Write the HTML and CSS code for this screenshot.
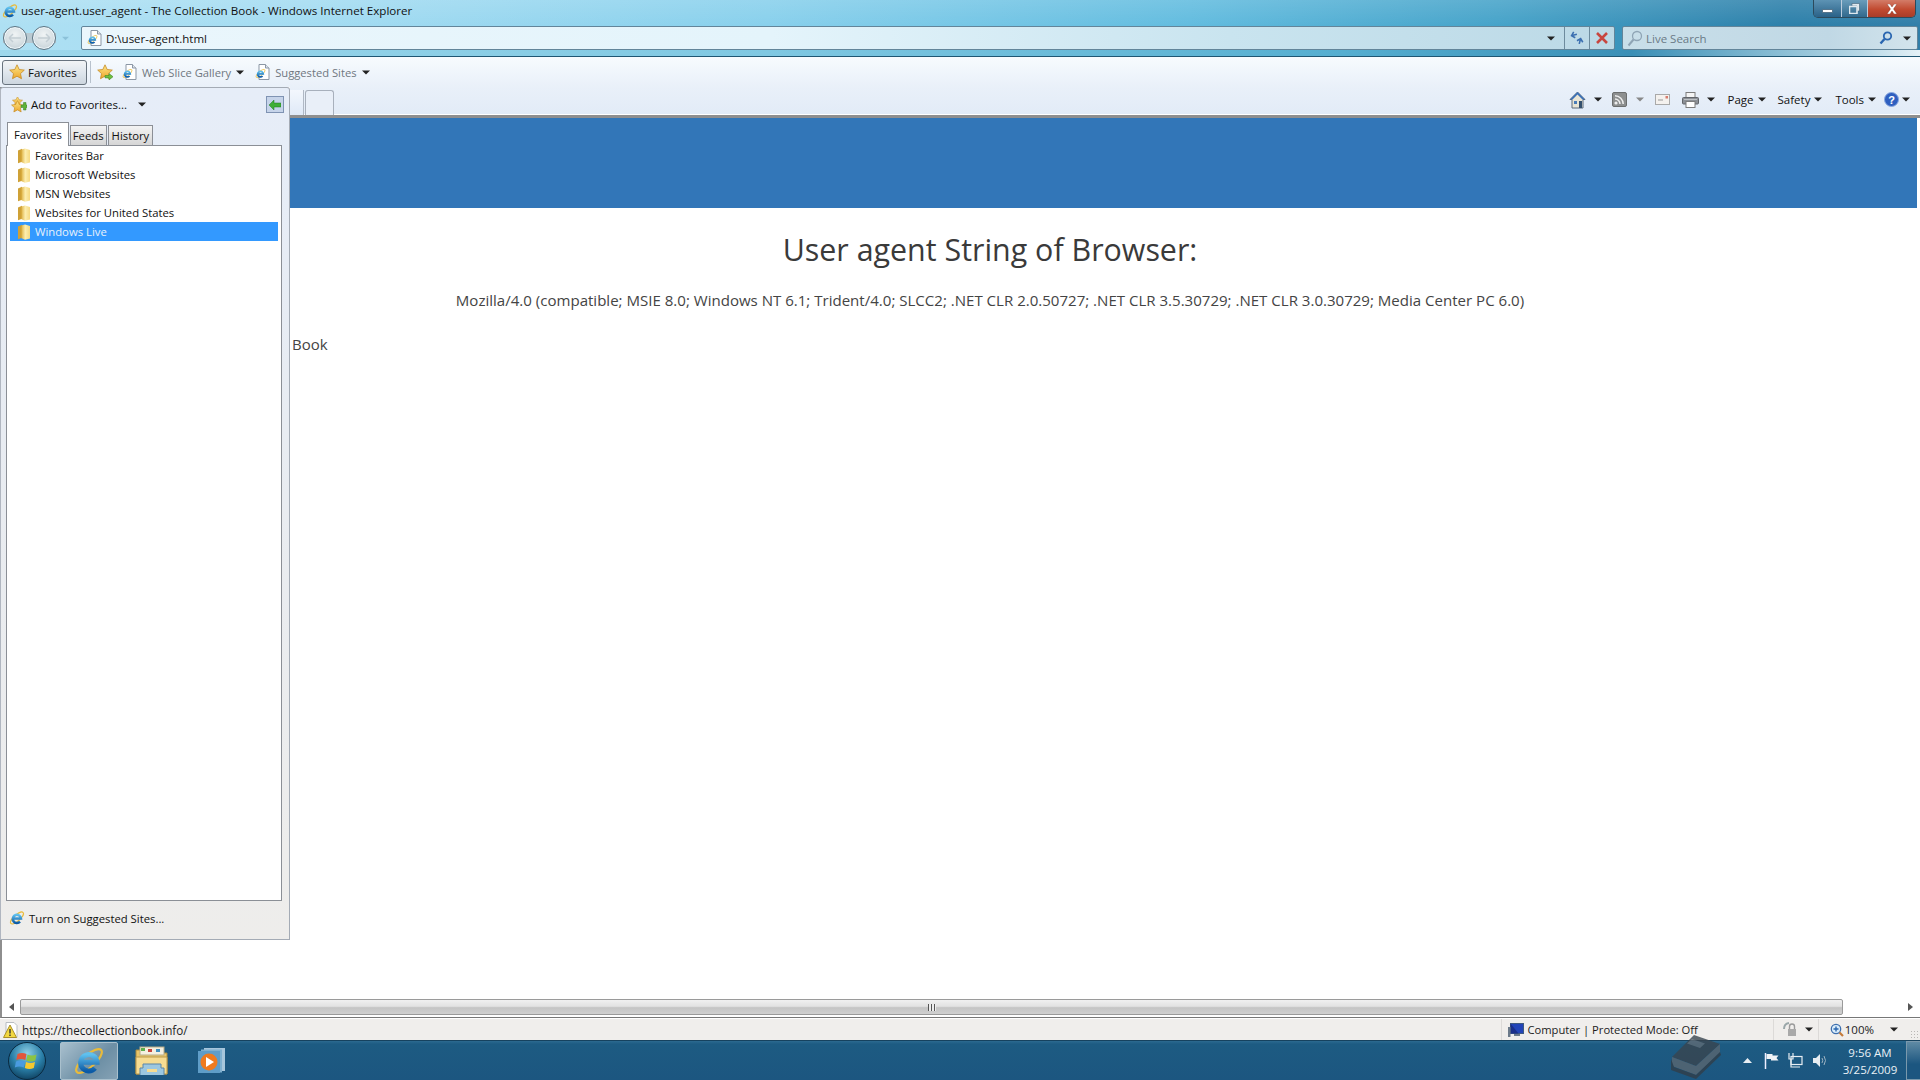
FILE: index.html
```html
<!DOCTYPE html>
<html lang="en">
<head>
<meta charset="utf-8">
<title>user-agent.user_agent - The Collection Book - Windows Internet Explorer</title>
<link rel="stylesheet" href="styles.css">
</head>
<body>
<svg class="defs" width="0" height="0" aria-hidden="true">
  <defs>
    <linearGradient id="ieBlue" x1="0" y1="0" x2="0" y2="1"><stop offset="0" stop-color="#5fc0ee"/><stop offset="1" stop-color="#0b5aa6"/></linearGradient>
    <linearGradient id="starG" x1="0" y1="0" x2="0" y2="1"><stop offset="0" stop-color="#fde98a"/><stop offset="1" stop-color="#eda52a"/></linearGradient>
    <linearGradient id="folderG" x1="0" y1="0" x2="1" y2="0"><stop offset="0" stop-color="#e0b548"/><stop offset="0.45" stop-color="#fdeeb0"/><stop offset="1" stop-color="#f6d980"/></linearGradient>
    <radialGradient id="orbG" cx="0.5" cy="0.3" r="0.75"><stop offset="0" stop-color="#8fd0e6"/><stop offset="0.55" stop-color="#2a7fa8"/><stop offset="1" stop-color="#0c3a58"/></radialGradient>
    <symbol id="ie" viewBox="0 0 16 16">
      <ellipse cx="8" cy="8" rx="8.200" ry="3" transform="rotate(-42 8 8)" fill="none" stroke="#e9bb3a" stroke-width="1.100"/>
      <path d="M4.200 8.600h7.800A4.100 4.100 0 1 0 11 11.600" fill="none" stroke="url(#ieBlue)" stroke-width="2.500"/>
    </symbol>
    <symbol id="page-ie" viewBox="0 0 16 16">
      <path d="M4 .5h6.500L14 4v11.500H4z" fill="#fff" stroke="#8b97a5"/>
      <path d="M10.500.5V4H14" fill="#dfe6ee" stroke="#8b97a5"/>
      <use href="#ie" x="0" y="4" width="11" height="11"/>
    </symbol>
    <symbol id="star" viewBox="0 0 16 16">
      <path d="M8 .8l2.200 4.700 5.100.6-3.800 3.500 1 5.100L8 12.200l-4.500 2.500 1-5.100L.7 6.100l5.100-.6z" fill="url(#starG)" stroke="#c58a24" stroke-width=".8"/>
    </symbol>
    <symbol id="folder" viewBox="0 0 14 16">
      <path d="M1 2.500L5 .8v13L1 15.200z" fill="#cfa136"/>
      <path d="M4.500 1.500L8 .5l5 1.500v12.500l-5 1.200-3.500-1.500z" fill="url(#folderG)"/>
    </symbol>
    <symbol id="caret" viewBox="0 0 8 5"><path d="M0 .5h8L4 4.500z" fill="currentColor"/></symbol>
  </defs>
</svg>

<div class="window">
  <header class="chrome">
    <div class="title-row">
      <svg class="ico16 title-ico"><use href="#ie"/></svg>
      <span class="title-text">user-agent.user_agent - The Collection Book - Windows Internet Explorer</span>
      <div class="win-btns">
        <span class="win-btn win-min"><i class="min-glyph"></i></span>
        <span class="win-btn win-max">
          <svg width="11" height="11" viewBox="0 0 11 11"><path d="M3 .5h7.500V8H8V3H3z" fill="#dfe8ee" stroke="#3f5f75" stroke-width=".6"/><path d="M.5 3.500H8v7H.5z" fill="none" stroke="#dfe8ee" stroke-width="1.600"/></svg>
        </span>
        <span class="win-btn win-close">
          <svg width="14" height="10" viewBox="0 0 14 10"><path d="M2 0h3l2 3 2-3h3L8.500 5 12 10H9L7 7l-2 3H2l3.500-5z" fill="#fff" stroke="#7a2a1c" stroke-width=".4"/></svg>
        </span>
      </div>
    </div>
    <div class="nav-row">
      <div class="nav-btns">
        <span class="nav-pair">
          <span class="nav-circle"><svg width="14" height="10" viewBox="0 0 14 10"><path d="M1 5h12M1 5l4-4M1 5l4 4" stroke="#c3ced4" stroke-width="1.500" fill="none"/></svg></span>
          <span class="nav-circle"><svg width="14" height="10" viewBox="0 0 14 10"><path d="M1 5h12M13 5L9 1M13 5L9 9" stroke="#c3ced4" stroke-width="1.500" fill="none"/></svg></span>
        </span>
        <svg class="nav-drop"><use href="#caret"/></svg>
      </div>
      <div class="address">
        <svg class="ico16 addr-ico"><use href="#page-ie"/></svg>
        <span class="addr-text">D:\user-agent.html</span>
        <svg class="caret addr-caret"><use href="#caret"/></svg>
        <span class="addr-btn">
          <svg width="16" height="14" viewBox="0 0 16 14"><path d="M8 4H3M5.500 1L2.500 4 5.500 7" stroke="#3b6fb0" stroke-width="1.600" fill="none" transform="rotate(-15 5 4)"/><path d="M8 10h5M10.500 13L13.500 10 10.500 7" stroke="#3b6fb0" stroke-width="1.600" fill="none" transform="rotate(-75 11 10)"/></svg>
        </span>
        <span class="addr-btn">
          <svg width="12" height="12" viewBox="0 0 12 12"><path d="M1 1l10 10M11 1L1 11" stroke="#c8463f" stroke-width="2.600"/></svg>
        </span>
      </div>
      <div class="search">
        <svg class="search-ghost" width="16" height="18" viewBox="0 0 16 18"><circle cx="10" cy="6" r="4.500" fill="none" stroke="#8fa5b5" stroke-width="1.300"/><path d="M6.500 9.500L1.500 15.500" stroke="#8fa5b5" stroke-width="2"/></svg>
        <span class="search-text">Live Search</span>
        <svg class="search-go" width="14" height="14" viewBox="0 0 14 14"><circle cx="8.500" cy="5" r="3.700" fill="none" stroke="#2a66b0" stroke-width="1.800"/><path d="M5.500 8L1.500 12.500" stroke="#2a66b0" stroke-width="2.400"/></svg>
        <svg class="caret search-caret"><use href="#caret"/></svg>
      </div>
    </div>
  </header>

  <nav class="favbar">
    <span class="fav-btn"><svg class="ico16"><use href="#star"/></svg>Favorites</span>
    <i class="fav-sep"></i>
    <svg class="ico16 fav-add" viewBox="0 0 16 16"><use href="#star"/><path d="M8 11.500h4V9.500l4 3.200-4 3.200v-2H8z" fill="#6fbf3f" stroke="#3f8a26" stroke-width=".6"/></svg>
    <span class="fav-link"><svg class="ico16"><use href="#page-ie"/></svg><span class="fav-label">Web Slice Gallery</span><svg class="caret"><use href="#caret"/></svg></span>
    <span class="fav-link"><svg class="ico16"><use href="#page-ie"/></svg><span class="fav-label">Suggested Sites</span><svg class="caret"><use href="#caret"/></svg></span>
  </nav>

  <div class="body-area">
    <aside class="sidebar">
      <div class="side-head">
        <svg class="ico16" viewBox="0 0 16 16"><use href="#star" x="1" y="-1" width="11" height="11"/><use href="#star" x="0" y="3" width="13" height="13"/><path d="M10 8h2.500V5.500h2.500V8h1v2.500h-1V13H12.500V10.500H10z" fill="#5db33a" stroke="#3a7d22" stroke-width=".5"/></svg>
        <span class="side-add">Add to Favorites...</span>
        <svg class="caret side-caret"><use href="#caret"/></svg>
        <span class="pin"><svg width="12" height="10" viewBox="0 0 12 10"><path d="M0 5l5-5v3h7v4H5v3z" fill="#3fae35" stroke="#1f7a22" stroke-width=".5"/></svg></span>
      </div>
      <div class="tabs">
        <span class="tab tab-on">Favorites</span>
        <span class="tab tab-feeds">Feeds</span>
        <span class="tab">History</span>
      </div>
      <ul class="tree">
        <li class="tree-row"><svg class="folder"><use href="#folder"/></svg>Favorites Bar</li>
        <li class="tree-row"><svg class="folder"><use href="#folder"/></svg>Microsoft Websites</li>
        <li class="tree-row"><svg class="folder"><use href="#folder"/></svg>MSN Websites</li>
        <li class="tree-row"><svg class="folder"><use href="#folder"/></svg>Websites for United States</li>
        <li class="tree-row tree-sel"><svg class="folder"><use href="#folder"/></svg>Windows Live</li>
      </ul>
      <div class="side-foot"><svg class="ico16"><use href="#ie"/></svg>Turn on Suggested Sites...</div>
    </aside>

    <main class="pane">
      <div class="cmdbar">
        <div class="tabstrip"><span class="ie-tab"></span><span class="ie-newtab"></span></div>
        <div class="cmds">
          <svg class="cmd-ico cmd-home" width="17" height="18" viewBox="0 0 17 18"><path d="M8.500 1L1 8.500h2V17h11V8.500h2z" fill="#e9e5d6" stroke="#5c6b7d"/><path d="M8.500 1L1 8.500h2.500l5-5 5 5H16z" fill="#3a6fb5"/><rect x="5" y="10" width="3" height="3" fill="#4a7db8"/><rect x="10" y="10" width="3" height="7" fill="#34506e"/></svg>
          <svg class="caret cmd-c1"><use href="#caret"/></svg>
          <svg class="cmd-ico cmd-feed" width="15" height="15" viewBox="0 0 15 15"><rect x=".5" y=".5" width="14" height="14" rx="1.500" fill="#8d8f8f" stroke="#6c6e6e"/><circle cx="4" cy="11" r="1.600" fill="#eee"/><path d="M3 7a5 5 0 0 1 5 5M3 3.800A8.200 8.200 0 0 1 11.200 12" stroke="#eee" stroke-width="1.500" fill="none"/></svg>
          <svg class="caret cmd-c2 cmd-dim"><use href="#caret"/></svg>
          <svg class="cmd-ico cmd-mail" width="15" height="11" viewBox="0 0 15 11"><rect x=".5" y=".5" width="14" height="10" fill="#f4f1ee" stroke="#a9a9a9"/><rect x="10.500" y="2" width="2.500" height="2.500" fill="#d77c6d"/><path d="M3 6h5" stroke="#999"/></svg>
          <svg class="cmd-ico cmd-print" width="17" height="16" viewBox="0 0 17 16"><rect x="4" y=".5" width="9" height="6" fill="#f5f5f5" stroke="#7c7c7c"/><rect x=".5" y="5.500" width="16" height="6.500" rx="1" fill="#8c9096" stroke="#62656a"/><rect x="4" y="9.500" width="9" height="6" fill="#fff" stroke="#7c7c7c"/><path d="M2 7.500h13" stroke="#bcc0c4"/></svg>
          <svg class="caret cmd-c3"><use href="#caret"/></svg>
          <span class="cmd-menu cmd-page">Page<svg class="caret"><use href="#caret"/></svg></span>
          <span class="cmd-menu cmd-safety">Safety<svg class="caret"><use href="#caret"/></svg></span>
          <span class="cmd-menu cmd-tools">Tools<svg class="caret"><use href="#caret"/></svg></span>
          <svg class="cmd-ico cmd-help" width="15" height="15" viewBox="0 0 15 15"><circle cx="7.500" cy="7.500" r="7" fill="#2f5fc0" stroke="#8aa8df"/><text x="7.500" y="12" text-anchor="middle" class="help-q">?</text></svg>
          <svg class="caret cmd-c4"><use href="#caret"/></svg>
        </div>
      </div>
      <div class="page">
        <div class="banner"></div>
        <div class="page-inner">
          <h1 class="h-title">User agent String of Browser:</h1>
          <p class="ua">Mozilla/4.0 (compatible; MSIE 8.0; Windows NT 6.1; Trident/4.0; SLCC2; .NET CLR 2.0.50727; .NET CLR 3.5.30729; .NET CLR 3.0.30729; Media Center PC 6.0)</p>
          <p class="book">Book</p>
        </div>
      </div>
    </main>
  </div>

  <div class="hscroll">
    <span class="sb-arrow"><svg width="5" height="8" viewBox="0 0 5 8"><path d="M5 0v8L0 4z" fill="#555"/></svg></span>
    <span class="sb-thumb"><i class="sb-grip"></i></span>
    <span class="sb-arrow"><svg width="5" height="8" viewBox="0 0 5 8"><path d="M0 0v8l5-4z" fill="#555"/></svg></span>
  </div>

  <footer class="status">
    <svg class="ico16 st-warn" viewBox="0 0 16 16"><path d="M3 .5h8l3 3v12H3z" fill="#fff" stroke="#b9bdc2"/><path d="M7 3l6.500 12.500H.5z" fill="#f3d840" stroke="#a98f2a"/><path d="M7 7v4.500M7 12.500V14" stroke="#333" stroke-width="1.400"/></svg>
    <span class="st-url">https://thecollectionbook.info/</span>
    <i class="st-sep st-sep-a"></i>
    <svg class="ico16 st-comp" viewBox="0 0 16 16"><rect x="2.500" y="1.500" width="13" height="10" fill="#2244b8" stroke="#3f5a80"/><path d="M2.500 1.500l8 10h-8z" fill="#1a2f8a"/><rect x="6" y="12" width="6" height="2" fill="#6c7a8a"/><rect x="0" y="5" width="2.500" height="10" fill="#6c7a8a"/></svg>
    <span class="st-zone">Computer | Protected Mode: Off</span>
    <i class="st-sep st-sep-b"></i>
    <svg class="st-lock" width="14" height="15" viewBox="0 0 14 15"><path d="M1 7C1 4 3 1.500 6 1" stroke="#9aa7a9" stroke-width="2" fill="none"/><path d="M6.500 7V4.500a2.500 2.500 0 0 1 5 0V7" stroke="#9a9a9a" stroke-width="1.400" fill="none"/><rect x="5" y="7" width="8" height="7" fill="#a9a9a9"/></svg>
    <svg class="caret st-c1"><use href="#caret"/></svg>
    <i class="st-sep st-sep-c"></i>
    <svg class="st-zoom" width="14" height="14" viewBox="0 0 14 14"><circle cx="6" cy="6" r="4.700" fill="#d9ecfa" stroke="#3e6fae" stroke-width="1.300"/><path d="M9.500 9.500L13 13" stroke="#c47a3a" stroke-width="2.200"/><path d="M3.500 6h5M6 3.500v5" stroke="#2a66b0" stroke-width="1.400"/></svg>
    <span class="st-pct">100%</span>
    <svg class="caret st-c2"><use href="#caret"/></svg>
    <i class="st-grip"></i>
  </footer>

  <div class="taskbar">
    <span class="orb">
      <svg width="38" height="38" viewBox="0 0 38 38"><circle cx="19" cy="19" r="18.500" fill="url(#orbG)" stroke="#0a2a40"/><path d="M9.500 12q4.500-2 9 0l-1.200 6q-4.500-2-9 0z" fill="#e2553a"/><path d="M19.500 12.500q4.500 2 9 0l-1.200 6q-4.500 2-9 0z" fill="#8cc443"/><path d="M8 19.500q4.500-2 9 0L15.800 25.500q-4.500-2-9 0z" fill="#4a9be0"/><path d="M18 20q4.500 2 9 0L25.800 26q-4.500 2-9 0z" fill="#f7c92f"/></svg>
    </span>
    <span class="task-on"><svg width="32" height="32"><use href="#ie"/></svg></span>
    <svg class="task-explorer" width="34" height="30" viewBox="0 0 34 30"><path d="M1 4h12l3 3h16v21H1z" fill="#e8c66a" stroke="#a98a3c"/><rect x="5" y="1" width="24" height="8" fill="#f4f0e0" stroke="#b8ac86"/><rect x="6" y="2" width="4" height="3" fill="#5dae4c"/><rect x="13" y="3" width="4" height="3" fill="#c9453c"/><rect x="21" y="3" width="4" height="3" fill="#3f8fc0"/><path d="M1 11h31v17H1z" fill="#f6dc92" stroke="#b9984a"/><path d="M5 29v-7h3v-4h18v4h3v7" fill="#9cc7e0" stroke="#5b86a8"/><rect x="12" y="23" width="10" height="3" fill="#f6dc92"/></svg>
    <svg class="task-wmp" width="28" height="26" viewBox="0 0 28 26"><rect x="6" y="0" width="21" height="23" fill="#a7c6dc"/><rect x="3" y="1.500" width="21" height="23" fill="#7fb0d0"/><rect x="0" y="3" width="22" height="22" fill="#5f9dc8"/><circle cx="11" cy="14" r="8.500" fill="#ee7a1e"/><path d="M8 9l8 5-8 5z" fill="#fff"/></svg>
    <div class="tray">
      <svg class="tray-up" width="9" height="5" viewBox="0 0 9 5"><path d="M0 5L4.500 0 9 5z" fill="#e8eef3"/></svg>
      <svg class="tray-ico" width="15" height="16" viewBox="0 0 15 16"><path d="M1.500 0v16" stroke="#eef" stroke-width="1.500"/><path d="M2.500 1h6v1.500h6l-2 2.500 2 2.500H7V6H2.500z" fill="#eef2f6"/></svg>
      <svg class="tray-ico" width="15" height="15" viewBox="0 0 15 15"><rect x="3" y="3.500" width="11" height="8" fill="none" stroke="#e6edf2" stroke-width="1.200"/><path d="M1 0v6h4V0M3 6v8h9" stroke="#e6edf2" stroke-width="1.200" fill="none"/></svg>
      <svg class="tray-ico" width="15" height="15" viewBox="0 0 15 15"><path d="M1 5h3l4-4v13l-4-4H1z" fill="#e6edf2"/><path d="M10 5q1.500 2.500 0 5M12 3q3 4.500 0 9" stroke="#9db3c2" fill="none"/></svg>
      <div class="clock"><span>9:56 AM</span><span>3/25/2009</span></div>
      <span class="show-desk"></span>
    </div>
  </div>

  <svg class="watermark" width="52" height="46" viewBox="0 0 52 46">
    <path d="M24 2l26 9-24 22L2 24z" fill="#39454f"/>
    <path d="M22 6l13 4.500-5 4.500-13-4.500z" fill="#5f6a74"/>
    <path d="M2 24v9l24 9 24-22v-9L26 33z" fill="#5a6670"/>
    <path d="M1 26v11l25 9 25-24-1-3-24 23-22-8z" fill="#323e48"/>
  </svg>
</div>
</body>
</html>
```
FILE: styles.css
```css
* { box-sizing: border-box; }
html, body { margin: 0; height: 100%; overflow: hidden; }
body { font-family: "Open Sans", "Noto Sans", sans-serif; font-size: 11.5px; color: #1c1c1c; }
.defs { position: absolute; }
.window { position: relative; width: 1920px; height: 1080px; display: flex; flex-direction: column; background: #fff; overflow: hidden; }
.ico16 { width: 16px; height: 16px; flex: none; }
.caret { width: 8px; height: 5px; flex: none; color: #222; }

/* chrome */
.chrome { height: 57px; flex: none; border-bottom: 1px solid #1f5673;
  background: linear-gradient(180deg, rgba(255,255,255,.12) 0, rgba(255,255,255,0) 26px), linear-gradient(90deg, #aee0f3 0, #a4dcf2 16%, #88d0ec 40%, #62bcdf 62%, #46a3c9 78%, #2d80aa 93%, #327fa9 100%);
  position: relative; }
.chrome::after { content: ""; position: absolute; left: 0; right: 0; bottom: 0; height: 6px;
  background: linear-gradient(90deg, #9ed8ec 0, #7fc8e2 40%, #55aed0 70%, #3a8fb6 85%, #b7d8e6 97%, #e4f1f7 100%); }
.title-row { height: 26px; display: flex; align-items: flex-start; padding: 3px 0 0 2px; }
.title-ico { margin-right: 3px; }
.title-text { font-size: 11.6px; line-height: 16px; color: #111; }
.win-btns { margin-left: auto; margin-right: 4px; margin-top: -3px; display: flex; height: 18px; border: 1px solid #2c4a5c; border-top: 0; border-radius: 0 0 5px 5px; overflow: hidden; }
.win-btn { display: flex; align-items: center; justify-content: center; height: 100%; }
.win-min { width: 28px; background: linear-gradient(180deg, #5d93b4, #2a6288); border-right: 1px solid #bcd; }
.win-max { width: 26px; background: linear-gradient(180deg, #6a9dbb, #31698d); border-right: 1px solid #bcd; }
.win-close { width: 47px; background: linear-gradient(180deg, #d37c68 0, #c14a30 55%, #a83c28 100%); }
.min-glyph { width: 11px; height: 4px; background: #fff; margin-top: 5px; border: 1px solid #55758c; }

.nav-row { height: 24px; display: flex; align-items: stretch; position: relative; z-index: 1; }
.nav-btns { width: 81px; flex: none; display: flex; align-items: center; padding-left: 3px; }
.nav-pair { display: flex; gap: 5px; background: linear-gradient(180deg, transparent 30%, #b9c9d1 30%, #b9c9d1 70%, transparent 70%); }
.nav-circle { width: 24px; height: 24px; border-radius: 50%; border: 1px solid #5d7583; display: flex; align-items: center; justify-content: center;
  background: radial-gradient(circle at 50% 35%, #f0f4f5 0, #d6dfe3 55%, #bcc9cf 100%); box-shadow: inset 0 0 0 1px #eff6fa; }
.nav-drop { width: 7px; height: 5px; color: #8cc2d9; margin-left: 6px; }
.address { width: 1534px; flex: none; display: flex; align-items: center; padding-left: 5px; border: 1px solid #62859a; border-radius: 2px;
  background: linear-gradient(90deg, #eaf6fc 0, #e4f4fb 45%, #c9e4ef 75%, #bcd9e6 100%); }
.addr-ico { margin-right: 3px; }
.addr-text { color: #111; }
.addr-caret { margin-left: auto; margin-right: 9px; }
.addr-btn { width: 25px; height: 100%; display: flex; align-items: center; justify-content: center; border-left: 1px solid #6d8b9d; }
.search { width: 296px; flex: none; margin-left: 7px; display: flex; align-items: center; padding: 0 6px 0 4px; border: 1px solid #62859a; border-radius: 2px;
  background: linear-gradient(90deg, #c9dfe9, #c0d8e5 70%, #d3e4ec); }
.search-ghost { margin-right: 3px; margin-top: 2px; }
.search-text { color: #6a7a86; }
.search-go { margin-left: auto; margin-right: 10px; }

/* favorites bar */
.favbar { height: 30px; flex: none; display: flex; align-items: center; padding: 0 0 0 2px; background: linear-gradient(180deg, #f7fbfe 0, #e9f0f9 100%); }
.fav-btn { width: 85px; height: 25px; display: flex; align-items: center; gap: 3px; padding-left: 6px; border: 1px solid #68737e; border-radius: 3px; background: linear-gradient(180deg, #f2f4f6 0, #dfe6ed 50%, #cdd6df 100%); color: #111; }
.fav-sep { width: 1px; height: 22px; background: #b8c2cd; margin: 0 6px 0 3px; }
.fav-add { margin-right: 9px; }
.fav-link { display: flex; align-items: center; margin-right: 11px; color: #6f7780; }
.fav-label { font-size: 11.2px; margin-left: 4px; margin-right: 5px; }

/* body */
.body-area { flex: 1; display: flex; min-height: 0; border-left: 2px solid #8e8e8e; }
.sidebar { height: 853px; flex: none; display: flex; flex-direction: column; margin-left: -2px; width: 290px; border: 1px solid #a4abb5; border-left-color: #b0b6c0; border-radius: 3px 3px 0 0;
  background: linear-gradient(180deg, #e6edf8 0, #e8ecf2 40%, #eeedeb 100%); }
.side-head { height: 33px; flex: none; display: flex; align-items: center; padding: 0 5px 0 10px; }
.side-add { margin-left: 4px; color: #111; }
.side-caret { margin-left: 11px; }
.pin { margin-left: auto; width: 18px; height: 17px; display: flex; align-items: center; justify-content: center; background: #c6d4ea; border: 1px solid #7f93b3; }
.tabs { height: 25px; flex: none; display: flex; align-items: flex-end; padding-left: 6px; gap: 1px; position: relative; z-index: 1; margin-bottom: -1px; }
.tab { height: 21px; padding: 0 3px; display: flex; align-items: center; border: 1px solid #8b8f96; background: linear-gradient(180deg, #f3f3f3, #d6d6d6); color: #111; font-size: 11.3px; }
.tab-feeds { padding: 0 2px; }
.tab-on { height: 24px; padding: 0 6px; background: #fff; border-bottom: 0; }
.tree { list-style: none; margin: 0 7px 0 5px; padding: 0 3px; flex: 1; min-height: 0; background: #fff; border: 1px solid #8b8f96; font-size: 11.3px; }
.tree-row { height: 19px; display: flex; align-items: center; padding-left: 7px; color: #111; }
.tree-sel { background: #3399ff; color: #e8f1fb; }
.folder { width: 14px; height: 16px; flex: none; margin-right: 4px; }
.side-foot { height: 38px; padding-bottom: 4px; flex: none; display: flex; align-items: center; gap: 4px; padding-left: 8px; color: #111; font-size: 11.3px; }

.pane { flex: 1; min-width: 0; display: flex; flex-direction: column; }
.cmdbar { height: 31px; flex: none; display: flex; align-items: stretch; background: linear-gradient(180deg, #e9f0f9 0, #e2ebf7 100%); border-bottom: 3px solid #8f8f8f; box-shadow: inset 0 -1px 0 #fff; }
.tabstrip { display: flex; align-items: flex-end; }
.ie-tab { width: 14px; height: 25px; background: linear-gradient(180deg, #f3f7fd, #dfe9f7); border-right: 1px solid #b0b8c4; }
.ie-newtab { width: 29px; height: 25px; margin-left: 1px; background: #e9eff8; border: 1px solid #a8b0bc; border-bottom: 0; border-radius: 3px 3px 0 0; }
.cmds { margin-left: auto; display: flex; align-items: center; padding: 0 10px 0 0; color: #111; margin-top: -3px; }
.cmd-ico { flex: none; }
.cmd-c1 { margin-left: 8px; }
.cmd-feed { margin-left: 10px; }
.cmd-c2 { margin-left: 9px; }
.cmd-dim { color: #888; }
.cmd-mail { margin-left: 11px; }
.cmd-print { margin-left: 12px; }
.cmd-c3 { margin-left: 8px; }
.cmd-menu { display: flex; align-items: center; gap: 4px; margin-left: 13px; }
.cmd-page { margin-left: 13px; }
.cmd-safety { margin-left: 12px; }
.cmd-help { margin-left: 8px; }
.help-q { fill: #fff; font: 700 11px "Liberation Sans", sans-serif; }
.cmd-c4 { margin-left: 3px; }

.page { flex: 1; min-height: 0; width: 1627px; background: #fff; }
.banner { height: 90px; background: #3276b8; }
.page-inner { width: 1400px; padding: 0 2px; }
.h-title { margin: 23px 0 0; font-size: 30.4px; line-height: 38px; font-weight: 400; text-align: center; color: #3a3a3a; }
.ua { margin: 20px 0 0; font-size: 15.05px; line-height: 22px; text-align: center; color: #444; }
.book { margin: 22px 0 0; font-size: 15px; line-height: 22px; color: #444; }

/* scrollbar */
.hscroll { height: 20px; flex: none; display: flex; align-items: flex-start; border-left: 2px solid #8e8e8e; border-bottom: 1px solid #777; padding-top: 1px; background: #fff; }
.sb-arrow { width: 18px; height: 16px; flex: none; display: flex; align-items: center; justify-content: center; }
.sb-thumb { width: 1823px; height: 16px; display: flex; align-items: center; justify-content: center; border: 1px solid #9a9a9a; border-radius: 2px; background: linear-gradient(180deg, #f0f0f0 0, #e2e2e2 45%, #c4c4c4 55%, #d0d0d0 100%); }
.sb-arrow:last-child { margin-left: auto; width: 20px; }
.sb-grip { width: 8px; height: 7px; background: repeating-linear-gradient(90deg, #555 0 1px, #eee 1px 3px); }

/* status */
.status { height: 21px; flex: none; display: flex; align-items: center; margin-top: 1px; padding-left: 3px; background: #f0eeec; position: relative; }
.st-warn { flex: none; }
.st-url { font-size: 11.7px; margin-left: 3px; }
.st-sep { width: 1px; height: 21px; background: #dcdad8; flex: none; }
.st-sep-a { margin-left: auto; }
.st-comp { margin-left: 6px; }
.st-zone { font-size: 11.2px; margin-left: 3px; }
.st-sep-b { margin-left: 75px; }
.st-lock { margin-left: 9px; }
.st-c1 { margin-left: 8px; }
.st-sep-c { margin-left: 5px; }
.st-zoom { margin-left: 11px; }
.st-pct { margin-left: 1px; }
.st-c2 { margin-left: 16px; margin-right: 12px; }
.st-grip { width: 10px; height: 10px; align-self: flex-end; background: radial-gradient(circle, #b9b7b5 1px, transparent 1px) 0 0 / 3px 3px; }

/* taskbar */
.taskbar { height: 40px; flex: none; display: flex; align-items: center; background: linear-gradient(180deg, #2c6a90 0, #1d5b82 8%, #1c5680 100%); border-top: 1px solid #16425f; color: #fff; }
.orb { width: 60px; flex: none; display: flex; align-items: center; padding-left: 8px; }
.task-on { width: 58px; height: 38px; flex: none; display: flex; align-items: center; justify-content: center; border: 1px solid #a9c0cd; border-radius: 2px; background: linear-gradient(135deg, #a9c0ce 0, #6d8fa5 60%, #85a2b5 100%); }
.task-explorer { flex: none; margin-left: 17px; }
.task-wmp { flex: none; margin-left: 29px; }
.tray { margin-left: auto; display: flex; align-items: center; height: 100%; }
.tray-up { margin-right: 12px; }
.tray-ico { margin-right: 9px; }
.clock { width: 62px; margin-left: 3px; margin-right: 5px; display: flex; flex-direction: column; align-items: center; line-height: 17px; color: #eaf1f6; }
.show-desk { width: 14px; height: 100%; border: 1px solid #7a99ad; border-right: 0; background: linear-gradient(180deg, #5f8aa4, #1c5680 60%); }

.watermark { position: absolute; left: 1670px; top: 1033px; opacity: .8; }
```
